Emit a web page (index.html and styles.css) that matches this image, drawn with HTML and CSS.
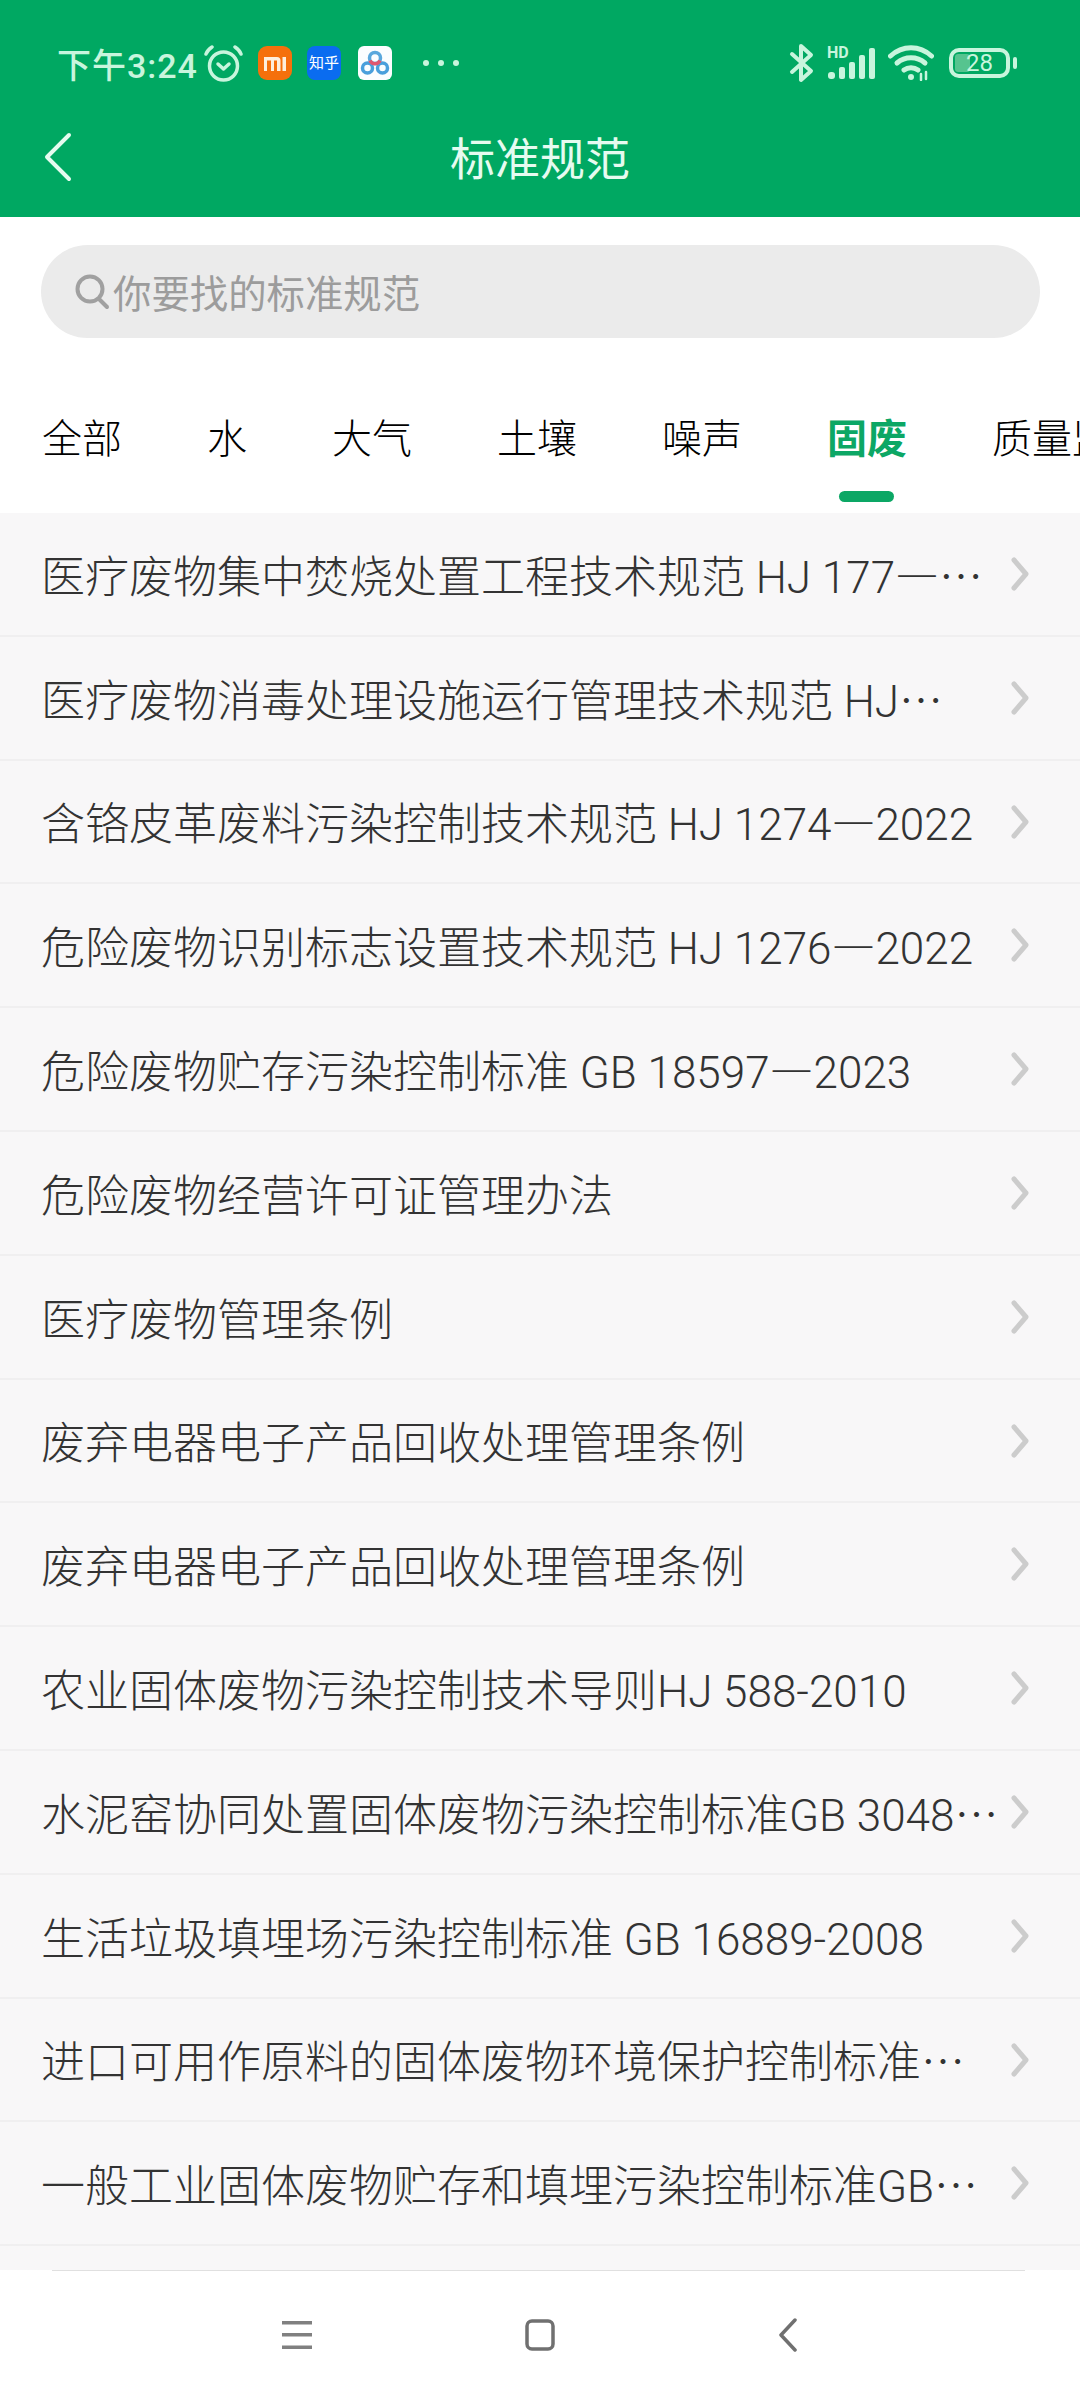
FILE: index.html
```html
<!DOCTYPE html>
<html lang="zh-CN">

<head>
    <meta charset="UTF-8">
    <meta name="viewport" content="width=device-width, initial-scale=1.0">
    <title>标准规范</title>
    <link rel="stylesheet" href="styles.css">
</head>

<body>
    <header class="header">
        <div class="statusBar">
            <span class="time">下午3:24</span>
            <svg class="alarm" width="39" height="37" viewBox="0 0 39 37" fill="none" stroke="#c8f5dd" stroke-width="3.5" stroke-linecap="round" stroke-linejoin="round">
                <circle cx="19.5" cy="21" r="14"/>
                <path d="M14 19l5.500 5 5.500-5"/>
                <path d="M2 9c1-3 3-5 6-7"/>
                <path d="M37 9c-1-3-3-5-6-7"/>
            </svg>
            <svg class="appIcon" width="34" height="34" viewBox="0 0 34 34">
                <rect width="34" height="34" rx="9" fill="#f5700c"/>
                <path d="M6 11h13a3.500 3.500 0 0 1 3.500 3.500V25h-3.500V14.500H16V25h-3V14.500H9V25H6z" fill="#fdeedd"/>
                <rect x="24.500" y="11" width="3.500" height="14" fill="#fdeedd"/>
            </svg>
            <span class="zhihu">知乎</span>
            <svg class="appIcon" width="34" height="34" viewBox="0 0 34 34" fill="none">
                <rect width="34" height="34" rx="6" fill="#fbfdff"/>
                <circle cx="9.500" cy="22" r="5" stroke="#4a9fdc" stroke-width="3.500"/>
                <circle cx="24.500" cy="22" r="5" stroke="#4a9fdc" stroke-width="3.500"/>
                <circle cx="17" cy="12" r="5.500" stroke="#5aa7dd" stroke-width="3.500"/>
                <path d="M12 14.500a5.500 5.500 0 0 0 10 0" stroke="#e0566f" stroke-width="3.500"/>
            </svg>
            <span class="dots"><i></i><i></i><i></i></span>
            <div class="statusRight">
                <svg width="25" height="40" viewBox="0 0 25 40" fill="none" stroke="#c8f5dd" stroke-width="4" stroke-linejoin="round" stroke-linecap="round">
                    <path d="M3 11l19 17-10 9V3l10 9L3 29"/>
                </svg>
                <span class="signal">
                    <span class="hd">HD</span>
                    <svg width="49" height="31" viewBox="0 0 49 31" fill="#c8f5dd">
                        <rect x="2" y="24" width="7" height="7" rx="3"/>
                        <rect x="13" y="19" width="6" height="12" rx="2"/>
                        <rect x="23" y="14" width="6" height="17" rx="2"/>
                        <rect x="33" y="7" width="6" height="24" rx="2"/>
                        <rect x="43" y="0" width="6" height="31" rx="2"/>
                    </svg>
                </span>
                <svg width="46" height="36" viewBox="0 0 46 36" fill="none" stroke="#c8f5dd" stroke-width="5" stroke-linecap="round">
                    <path d="M2.500 11c12-11 29-11 41 0"/>
                    <path d="M9 18c8-7 20-7 28 0"/>
                    <path d="M16 25c4-3 10-3 14 0"/>
                    <path d="M23 32h.01" stroke-width="6"/>
                    <path d="M33 29v6M38 27v7" stroke-width="2.500"/>
                </svg>
                <span class="battery"><span class="batteryFill"></span><span class="batteryNum">28</span></span>
                <span class="batteryTip"></span>
            </div>
        </div>
        <div class="navBar">
            <svg class="backIcon" width="28" height="50" viewBox="0 0 28 50" fill="none" stroke="#e6fbf0" stroke-width="4" stroke-linecap="round" stroke-linejoin="round">
                <path d="M25 3L3 25l22 22"/>
            </svg>
            <h1 class="title">标准规范</h1>
        </div>
    </header>

    <div class="searchBox">
        <svg width="35" height="36" viewBox="0 0 35 36" fill="none" stroke="#a0a0a0" stroke-width="4" stroke-linecap="round">
            <circle cx="15" cy="15" r="12.500"/>
            <path d="M24 25l8 8"/>
        </svg>
        <span class="searchText">你要找的标准规范</span>
    </div>

    <nav class="tabs">
        <a class="tab">全部</a>
        <a class="tab">水</a>
        <a class="tab">大气</a>
        <a class="tab">土壤</a>
        <a class="tab">噪声</a>
        <a class="tab active">固废</a>
        <a class="tab">质量监测</a>
    </nav>

    <main class="list">
        <div class="row"><span class="rowText">医疗废物集中焚烧处置工程技术规范 HJ 177<span class="dash">—</span>⋯</span><svg class="chevron" width="18" height="34" viewBox="0 0 18 34"><path d="M3 3l12 14L3 31"/></svg></div>
        <div class="row"><span class="rowText">医疗废物消毒处理设施运行管理技术规范 HJ⋯</span><svg class="chevron" width="18" height="34" viewBox="0 0 18 34"><path d="M3 3l12 14L3 31"/></svg></div>
        <div class="row"><span class="rowText">含铬皮革废料污染控制技术规范 HJ 1274<span class="dash">—</span>2022</span><svg class="chevron" width="18" height="34" viewBox="0 0 18 34"><path d="M3 3l12 14L3 31"/></svg></div>
        <div class="row"><span class="rowText">危险废物识别标志设置技术规范 HJ 1276<span class="dash">—</span>2022</span><svg class="chevron" width="18" height="34" viewBox="0 0 18 34"><path d="M3 3l12 14L3 31"/></svg></div>
        <div class="row"><span class="rowText">危险废物贮存污染控制标准 GB 18597<span class="dash">—</span>2023</span><svg class="chevron" width="18" height="34" viewBox="0 0 18 34"><path d="M3 3l12 14L3 31"/></svg></div>
        <div class="row"><span class="rowText">危险废物经营许可证管理办法</span><svg class="chevron" width="18" height="34" viewBox="0 0 18 34"><path d="M3 3l12 14L3 31"/></svg></div>
        <div class="row"><span class="rowText">医疗废物管理条例</span><svg class="chevron" width="18" height="34" viewBox="0 0 18 34"><path d="M3 3l12 14L3 31"/></svg></div>
        <div class="row"><span class="rowText">废弃电器电子产品回收处理管理条例</span><svg class="chevron" width="18" height="34" viewBox="0 0 18 34"><path d="M3 3l12 14L3 31"/></svg></div>
        <div class="row"><span class="rowText">废弃电器电子产品回收处理管理条例</span><svg class="chevron" width="18" height="34" viewBox="0 0 18 34"><path d="M3 3l12 14L3 31"/></svg></div>
        <div class="row"><span class="rowText">农业固体废物污染控制技术导则HJ 588-2010</span><svg class="chevron" width="18" height="34" viewBox="0 0 18 34"><path d="M3 3l12 14L3 31"/></svg></div>
        <div class="row"><span class="rowText">水泥窑协同处置固体废物污染控制标准GB 3048⋯</span><svg class="chevron" width="18" height="34" viewBox="0 0 18 34"><path d="M3 3l12 14L3 31"/></svg></div>
        <div class="row"><span class="rowText">生活垃圾填埋场污染控制标准 GB 16889-2008</span><svg class="chevron" width="18" height="34" viewBox="0 0 18 34"><path d="M3 3l12 14L3 31"/></svg></div>
        <div class="row"><span class="rowText">进口可用作原料的固体废物环境保护控制标准⋯</span><svg class="chevron" width="18" height="34" viewBox="0 0 18 34"><path d="M3 3l12 14L3 31"/></svg></div>
        <div class="row"><span class="rowText">一般工业固体废物贮存和填埋污染控制标准GB⋯</span><svg class="chevron" width="18" height="34" viewBox="0 0 18 34"><path d="M3 3l12 14L3 31"/></svg></div>
    </main>

    <footer class="bottomNav">
        <svg width="30" height="28" viewBox="0 0 30 28" fill="#808080">
            <rect y="0" width="30" height="3.500"/>
            <rect y="12" width="30" height="3.500"/>
            <rect y="24.500" width="30" height="3.500"/>
        </svg>
        <svg width="30" height="32" viewBox="0 0 30 32" fill="none" stroke="#707070" stroke-width="3.500">
            <rect x="2" y="2" width="26" height="28" rx="5"/>
        </svg>
        <svg class="navBack" width="20" height="34" viewBox="0 0 20 34" fill="none" stroke="#707070" stroke-width="3.500" stroke-linecap="round" stroke-linejoin="round">
            <path d="M17 2L3 17l14 15"/>
        </svg>
    </footer>
</body>

</html>
```

FILE: styles.css
```css
* {
    box-sizing: border-box;
}

body {
    margin: 0;
    width: 1080px;
    height: 2400px;
    display: flex;
    flex-direction: column;
    overflow: hidden;
    background: #fff;
    font-family: Roboto, "Noto Sans CJK SC", sans-serif;
}

/* header */
.header {
    height: 217px;
    background: #00a862;
    color: #e6fbf0;
}

.statusBar {
    height: 126px;
    padding: 0 63px 0 57px;
    display: flex;
    align-items: center;
}

.time {
    flex: none;
    width: 147px;
    font-size: 34px;
    font-weight: 500;
    letter-spacing: 1px;
    color: #c8f5dd;
    white-space: nowrap;
}

.alarm {
    flex: none;
    margin-right: 15px;
}

.appIcon {
    flex: none;
}

.zhihu {
    flex: none;
    width: 34px;
    height: 34px;
    margin: 0 17px 0 15px;
    border-radius: 8px;
    background: #0a6cf0;
    color: #fff;
    font-size: 15px;
    line-height: 34px;
    text-align: center;
    white-space: nowrap;
}

.dots {
    display: flex;
    gap: 9px;
    margin-left: 31px;
}

.dots i {
    width: 6px;
    height: 6px;
    border-radius: 50%;
    background: #c8f5dd;
}

.statusRight {
    margin-left: auto;
    display: flex;
    align-items: center;
}

.signal {
    position: relative;
    margin: 0 13px 0 12px;
    height: 31px;
}

.hd {
    position: absolute;
    left: 1px;
    top: -3px;
    font-size: 16px;
    font-weight: 700;
    line-height: 15px;
    color: #c8f5dd;
}

.battery {
    position: relative;
    width: 61px;
    height: 30px;
    margin-left: 15px;
    border: 4px solid #c8f5dd;
    border-radius: 10px;
    display: flex;
    align-items: center;
    justify-content: center;
}

.batteryFill {
    position: absolute;
    left: 2px;
    top: 2px;
    bottom: 2px;
    width: 15px;
    border-radius: 3px;
    background: #56c48f;
}

.batteryNum {
    position: relative;
    font-size: 24px;
    line-height: 24px;
    color: #c8f5dd;
}

.batteryTip {
    width: 4px;
    height: 12px;
    margin-left: 3px;
    border-radius: 2px;
    background: #c8f5dd;
}

.navBar {
    position: relative;
    height: 91px;
    display: flex;
    align-items: center;
    justify-content: center;
}

.backIcon {
    position: absolute;
    left: 44px;
    top: 6px;
}

.title {
    margin: 0 0 22px;
    font-size: 45px;
    font-weight: 400;
    line-height: 60px;
}

/* search */
.searchBox {
    height: 93px;
    margin: 28px 40px 0 41px;
    padding: 0 0 0 34px;
    display: flex;
    align-items: center;
    gap: 3px;
    border-radius: 47px;
    background: #ebebeb;
}

.searchText {
    margin-bottom: 2px;
    font-size: 38.400px;
    color: #9c9c9c;
}

/* tabs */
.tabs {
    height: 175px;
    padding: 74px 0 0 42px;
    display: flex;
    gap: 85px;
    overflow: hidden;
    white-space: nowrap;
}

.tab {
    position: relative;
    flex: none;
    font-size: 40px;
    font-weight: 300;
    line-height: 56px;
    color: #000;
}

.tab.active {
    color: #0ca765;
    font-weight: 700;
}

.tab.active::after {
    content: "";
    position: absolute;
    left: 12px;
    top: 79px;
    width: 55px;
    height: 11px;
    border-radius: 6px;
    background: #0ca765;
}

/* list */
.list {
    flex: 1;
    overflow: hidden;
    background: #f8f7f8;
}

.row {
    height: 123.800px;
    padding: 0 0 0 41px;
    position: relative;
    display: flex;
    align-items: center;
    border-bottom: 2px solid #f0eff0;
}

.rowText {
    font-size: 44px;
    font-weight: 300;
    color: #333;
    white-space: nowrap;
}

.dash {
    font-family: "Noto Sans CJK SC", sans-serif;
}

.chevron {
    position: absolute;
    left: 1011px;
    top: 44px;
    fill: none;
    stroke: #ccc;
    stroke-width: 5;
    stroke-linecap: round;
    stroke-linejoin: round;
}

/* bottom buttons */
.bottomNav {
    height: 130px;
    padding: 0 0 0 282px;
    display: flex;
    align-items: center;
    gap: 213px;
    background: #fff;
    position: relative;
}

.bottomNav::before {
    content: "";
    position: absolute;
    left: 52px;
    right: 55px;
    top: 0;
    height: 1px;
    background: #e0e0e0;
}

.navBack {
    margin-left: 10px;
}
```
